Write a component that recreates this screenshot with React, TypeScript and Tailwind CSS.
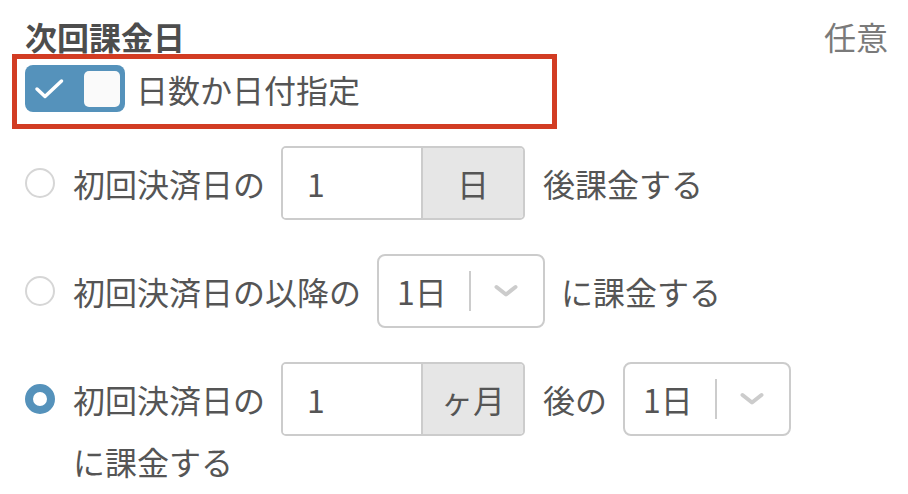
import React from "react";

const font = { fontFamily: '"Noto Sans CJK JP", "Noto Sans", sans-serif' };

function Radio({ checked }: { checked?: boolean }) {
  return (
    <span
      className={`block w-[30px] h-[30px] shrink-0 rounded-full ${
        checked ? "border-[8px] border-[#5592bb] bg-white" : "border-2 border-[#d6d6d6] bg-white"
      }`}
    />
  );
}

function AddonInput({ value, unit }: { value: string; unit: string }) {
  return (
    <div className="flex w-[244px] h-[74px] shrink-0 mr-[2px] border-2 border-[#cccccc] rounded-[5px] overflow-hidden">
      <div className="w-[138px] flex items-center pl-[24px] bg-white">{value}</div>
      <div className="flex-1 flex items-center justify-center border-l-2 border-[#cccccc] bg-[#e6e6e6]">
        {unit}
      </div>
    </div>
  );
}

function Select({ value }: { value: string }) {
  return (
    <div className="flex items-center w-[168px] h-[74px] shrink-0 border-2 border-[#cccccc] rounded-[8px] bg-white">
      <span className="w-[90px] pl-[18px]">{value}</span>
      <span className="w-[2px] h-[40px] bg-[#cccccc]" />
      <span className="flex-1 flex items-center justify-center pr-[2px]">
        <svg width="24" height="14" viewBox="0 0 24 14" fill="none">
          <polyline
            points="2.5,3 12,10.5 21.5,3"
            stroke="#cccccc"
            strokeWidth="4"
            strokeLinecap="round"
            strokeLinejoin="round"
          />
        </svg>
      </span>
    </div>
  );
}

export default function App() {
  return (
    <div className="w-[908px] h-[494px] bg-white text-[32px] text-[#555555] pl-[25px] pr-[20px] pt-[18px] overflow-hidden" style={font}>
      <div className="flex items-center justify-between h-[36px]">
        <span className="font-bold text-[#4d4d4d]">次回課金日</span>
        <span className="text-[#7a7a7a]">任意</span>
      </div>

      <div className="ml-[-13px] w-[545px] h-[75px] border-[5px] border-[#d23c23] pl-[8px] pt-[6px]">
        <div className="flex items-center h-[47px]">
          <div className="relative w-[100px] h-[47px] rounded-[8px] bg-[#5592bb]">
            <svg className="absolute left-0 top-0" width="50" height="47" viewBox="0 0 50 47" fill="none">
              <polyline
                points="12,24 20,31.5 36.5,16"
                stroke="white"
                strokeWidth="3.5"
                strokeLinecap="round"
                strokeLinejoin="round"
              />
            </svg>
            <span className="absolute right-[5px] top-[6px] w-[36px] h-[36px] rounded-[5px] bg-[#fafafa]" />
          </div>
          <span className="ml-[11px]">日数か日付指定</span>
        </div>
      </div>

      <div className="flex flex-col gap-[34px] mt-[17px]">
        <div className="flex items-center h-[74px]">
          <Radio />
          <div className="flex items-center gap-x-[16px] ml-[18px]">
            <span>初回決済日の</span>
            <AddonInput value="1" unit="日" />
            <span>後課金する</span>
          </div>
        </div>

        <div className="flex items-center h-[74px]">
          <Radio />
          <div className="flex items-center gap-x-[16px] ml-[18px]">
            <span>初回決済日の以降の</span>
            <Select value="1日" />
            <span>に課金する</span>
          </div>
        </div>

        <div className="flex items-start">
          <div className="flex items-center h-[74px]">
            <Radio checked />
          </div>
          <div className="flex flex-wrap items-center gap-x-[16px] gap-y-[5px] ml-[18px] flex-1">
            <span>初回決済日の</span>
            <AddonInput value="1" unit="ヶ月" />
            <span>後の</span>
            <Select value="1日" />
            <span className="leading-[40px]">に課金する</span>
          </div>
        </div>
      </div>
    </div>
  );
}
